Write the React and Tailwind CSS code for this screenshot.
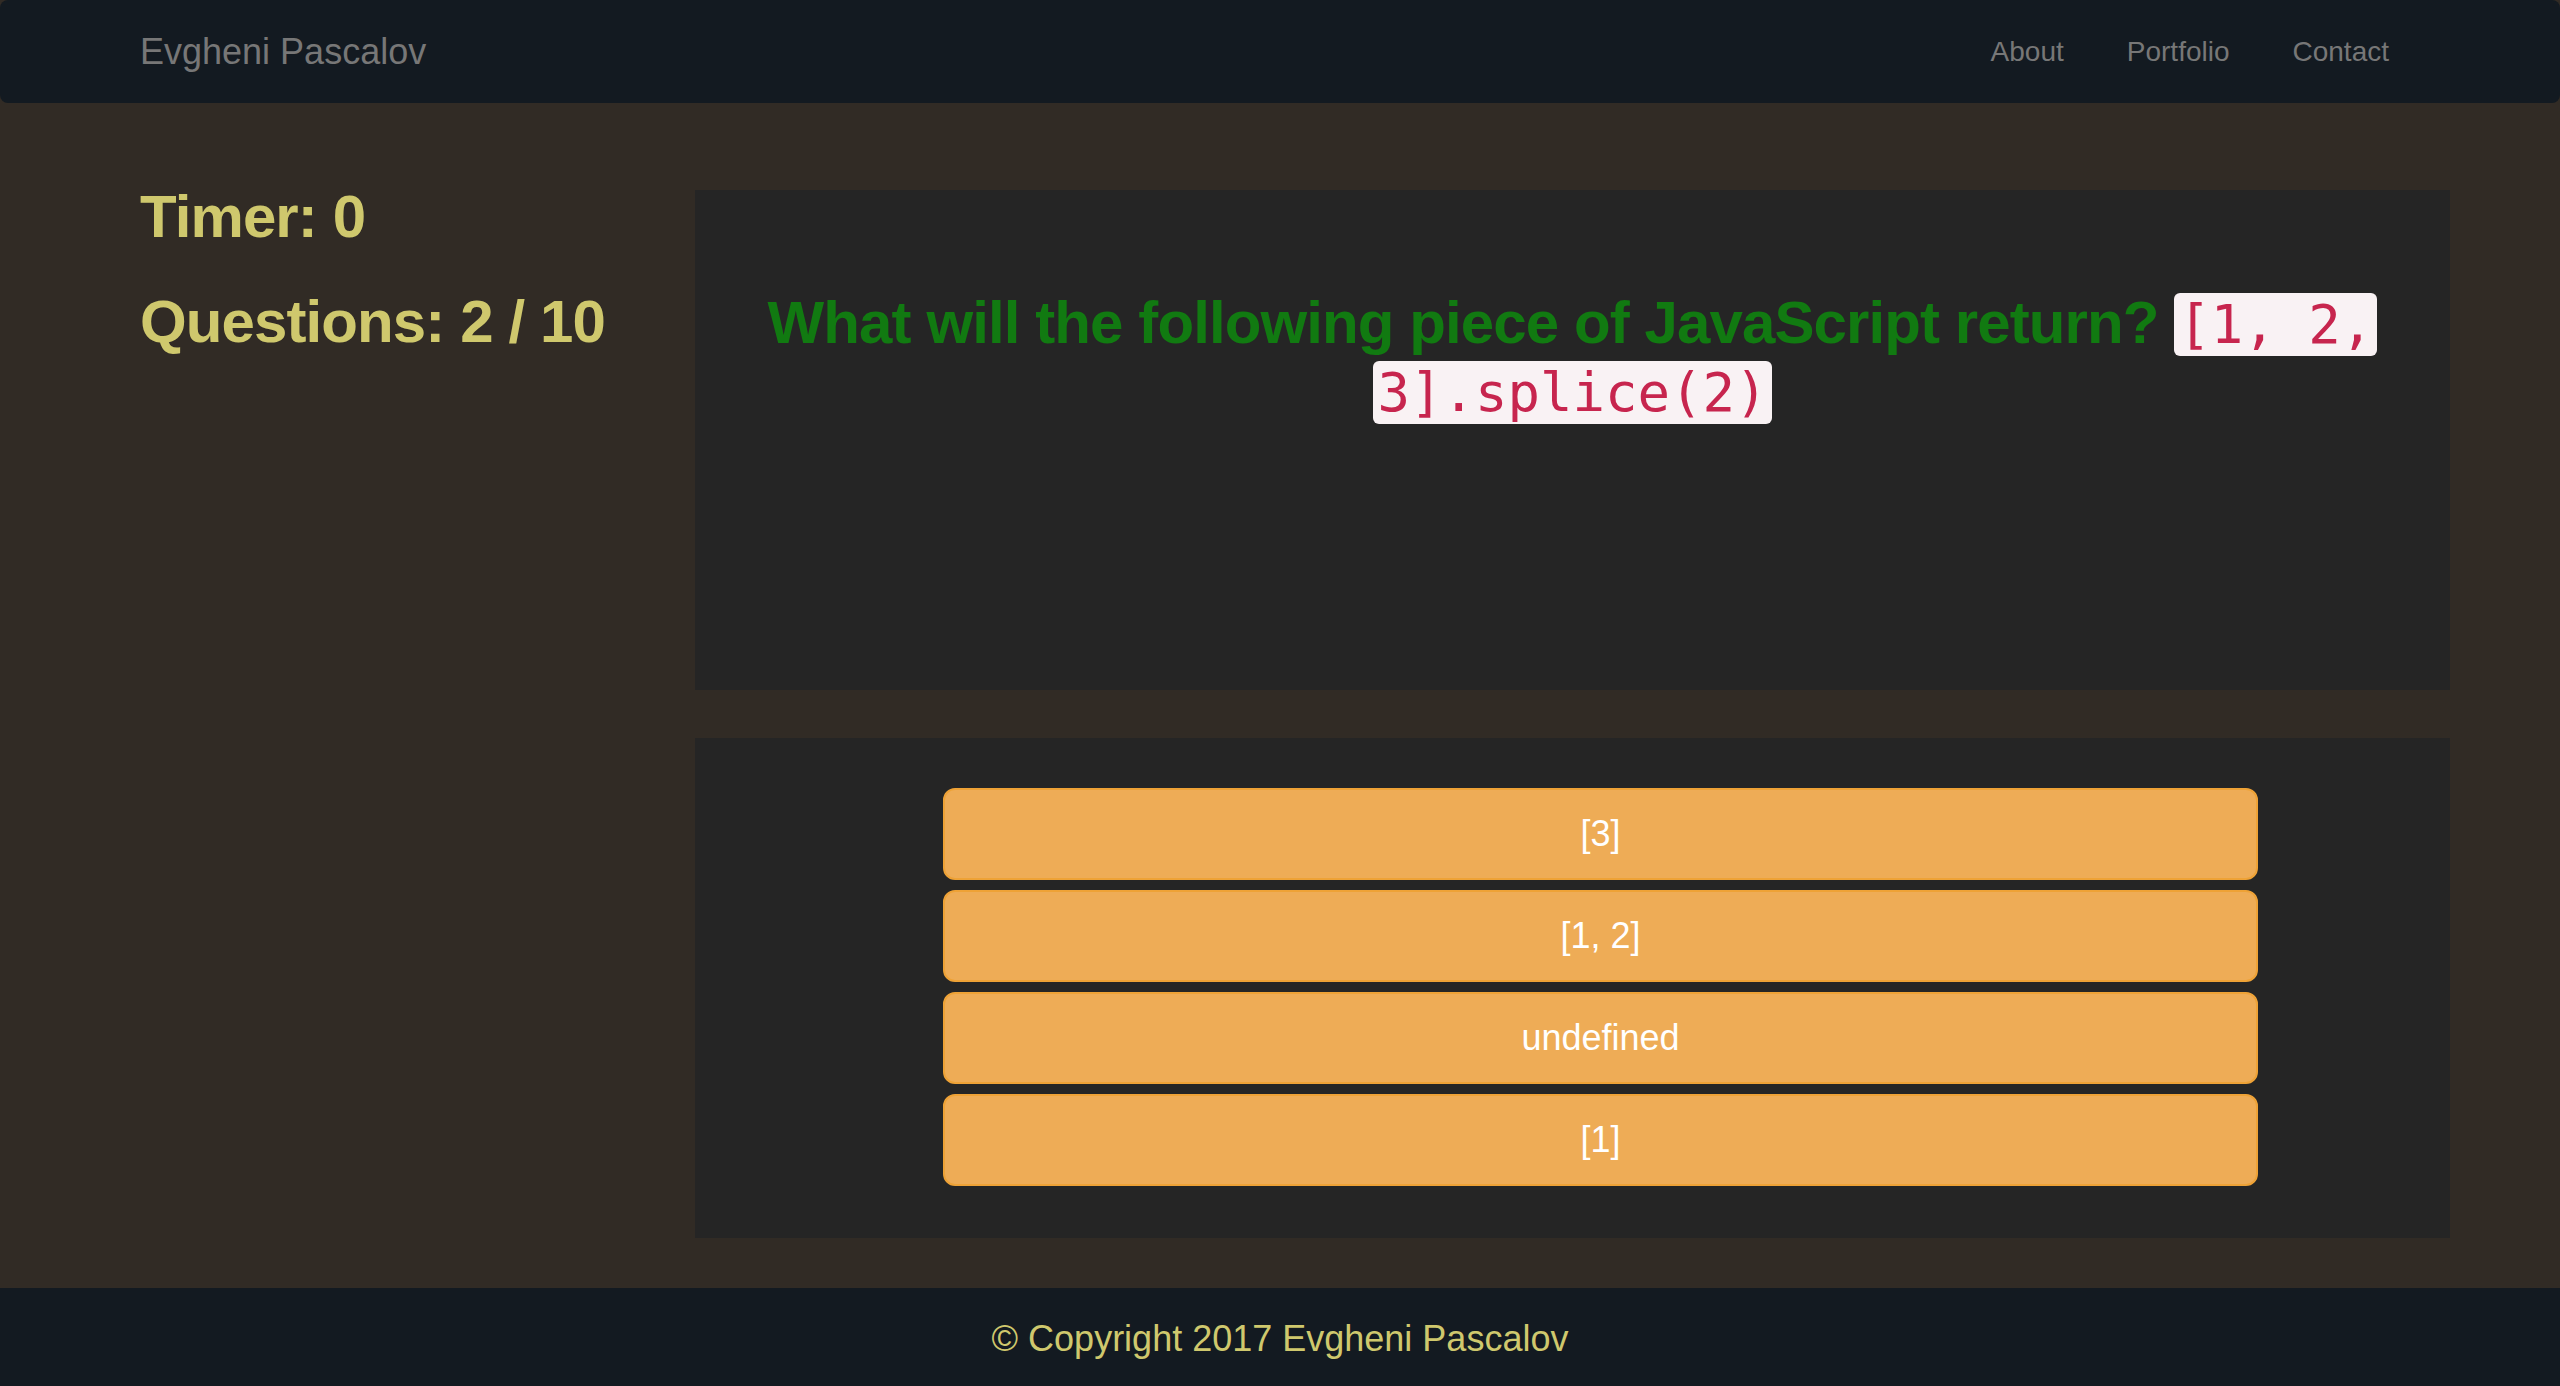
const answers = ['[3]', '[1, 2]', 'undefined', '[1]'];

const Navbar = () => (
  <nav className="h-[103px] bg-[#131a21] rounded-lg flex items-center justify-between pl-[140px] pr-[171px]">
    <a className="text-[36px] text-[#777777] leading-none">Evgheni Pascalov</a>
    <ul className="flex gap-[63px] text-[28px] text-[#777777] leading-none">
      <li>About</li>
      <li>Portfolio</li>
      <li>Contact</li>
    </ul>
  </nav>
);

const Sidebar = ({ timer, current, total }) => (
  <div className="w-[585px] pl-[30px] -mt-[6px] flex flex-col gap-[39px] text-[60px] leading-[66px] font-bold tracking-[-0.9px] text-[#cfc86d]">
    <h2>Timer: {timer}</h2>
    <h2>
      Questions: {current} / {total}
    </h2>
  </div>
);

const Code = ({ children }) => (
  <code className="bg-[#f9f2f4] text-[#c7254e] text-[54px] px-[4px] rounded-[6px] tracking-normal font-['DejaVu_Sans_Mono',monospace] font-normal">
    {children}
  </code>
);

const App = () => {
  return (
    <div className="min-h-screen bg-[#312b25] font-['Liberation_Sans',Arial,sans-serif]">
      <Navbar />
      <main className="flex px-[110px] pt-[87px] pb-[50px]">
        <Sidebar timer={0} current={2} total={10} />
        <div className="flex-1 flex flex-col gap-[48px]">
          <section className="h-[500px] bg-[#252525] pt-[100px] px-[30px] text-center">
            <h2 className="text-[60px] leading-[66px] font-bold tracking-[-0.9px] text-[#117a11]">
              What will the following piece of JavaScript return? <Code>[1, 2,</Code>
              <br />
              <Code>3].splice(2)</Code>
            </h2>
          </section>
          <section className="h-[500px] bg-[#252525] pt-[50px] pl-[248px] pr-[192px] flex flex-col gap-[10px]">
            {answers.map((a) => (
              <button
                key={a}
                className="h-[92px] w-full bg-[#eeac56] border-2 border-[#eea236] rounded-[12px] text-white text-[36px]"
              >
                {a}
              </button>
            ))}
          </section>
        </div>
      </main>
      <footer className="h-[98px] bg-[#131a21] flex items-center justify-center pt-[4px]">
        <p className="text-[36px] text-[#cfc86d]">© Copyright 2017 Evgheni Pascalov</p>
      </footer>
    </div>
  );
};

export default App;
